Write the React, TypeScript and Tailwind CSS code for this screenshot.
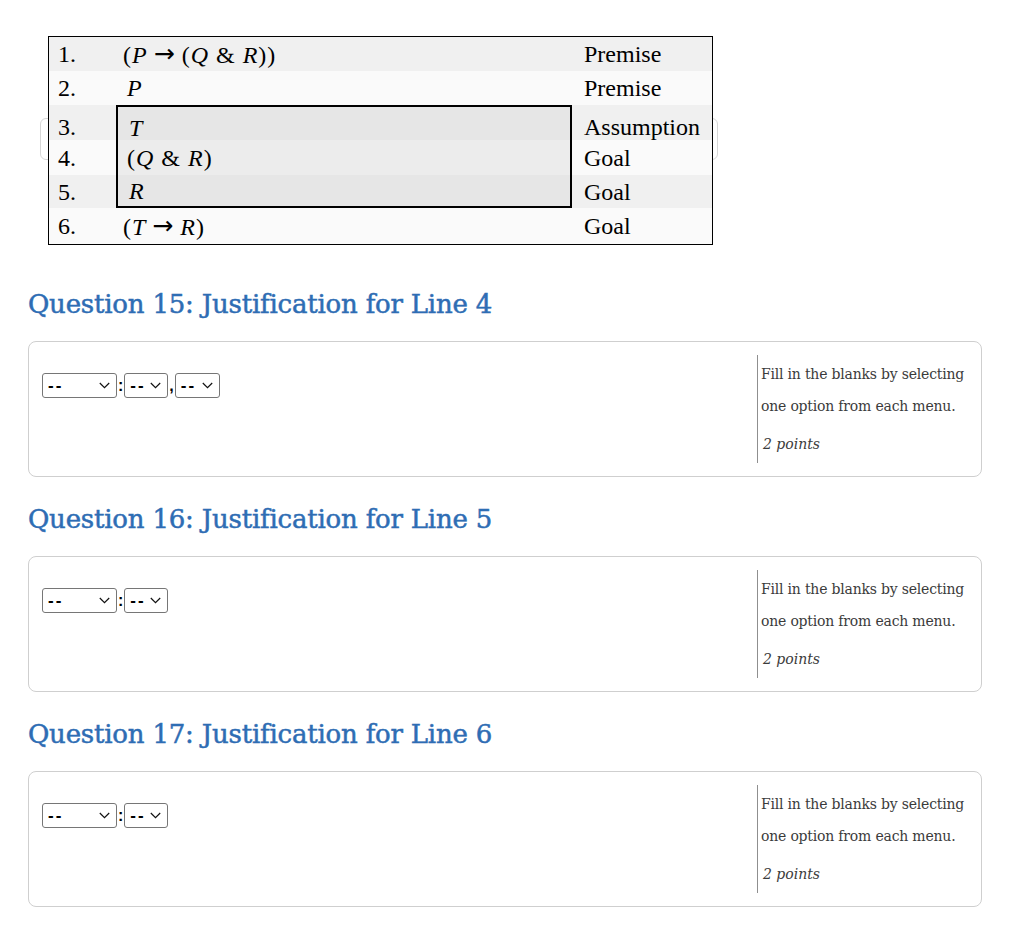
import React from "react";

const serif = { fontFamily: '"Liberation Serif", "Times New Roman", serif' };

function M({ children }: { children: React.ReactNode }) {
  return <span className="italic">{children}</span>;
}

function Arrow() {
  return (
    <span className="mx-[6px] not-italic text-[25px] font-['DejaVu_Sans',sans-serif] relative top-[-1px]">→</span>
  );
}

function Sel({ w }: { w: string }) {
  return (
    <div
      className={`flex items-center justify-between h-[25px] border border-[#767676] rounded-[3px] bg-white pl-[5px] pr-[6px] ${w}`}
    >
      <span className="text-[17px] text-black leading-none font-bold font-['Liberation_Sans',Arial,sans-serif] tracking-[2px]">--</span>
      <svg width="11" height="7" viewBox="0 0 11 7" fill="none">
        <path d="M0.8 1 L5.5 5.7 L10.2 1" stroke="#111" strokeWidth="1.2" />
      </svg>
    </div>
  );
}

function Sep({ c }: { c: string }) {
  return (
    <span className="text-[16px] text-black leading-none mx-[1px] font-semibold font-['Liberation_Sans',Arial,sans-serif]">
      {c}
    </span>
  );
}

function Card({ three }: { three?: boolean }) {
  return (
    <div className="flex justify-between border border-[#cfcfcf] rounded-[8px] h-[136px] w-[954px] py-[13px] pl-[13px] pr-[14px] bg-white">
      <div className="pt-[18px] flex items-start">
        <div className="flex items-center">
          <Sel w="w-[75px]" />
          <Sep c=":" />
          <Sel w="w-[44px]" />
          {three && (
            <>
              <Sep c="," />
              <Sel w="w-[45px]" />
            </>
          )}
        </div>
      </div>
      <div className="border-l border-[#8f8f8f] w-[210px] pl-[3px] pt-[3px] font-['DejaVu_Serif',Georgia,serif] text-[#3b3b3b]">
        <p className="text-[14px] leading-[32px] tracking-[-0.2px]">
          Fill in the blanks by selecting one option from each menu.
        </p>
        <p className="mt-[10px] text-[14px] leading-[24px] italic pl-[2px]">2 points</p>
      </div>
    </div>
  );
}

function Heading({ children, first }: { children: React.ReactNode; first?: boolean }) {
  return (
    <h2
      className={`${first ? "mt-[43px]" : "mt-[26px]"} mb-[21px] h-[32px] text-[26px] leading-[32px] text-[#2e6db4] font-['DejaVu_Serif',Georgia,serif] tracking-[-0.2px] [-webkit-text-stroke:0.5px_#2e6db4]`}
    >
      {children}
    </h2>
  );
}

export default function App() {
  const cellNum = "w-[67px] pl-[9px] shrink-0";
  const cellF = "w-[456px] pl-[7px] shrink-0 tracking-[1px]";
  const cellJ = "pl-[12px]";
  return (
    <div className="w-[1024px] min-h-[934px] bg-white pt-[36px] pl-[28px]">
      <div className="relative ml-[20px] w-[665px]">
        <div className="absolute left-[-8px] top-[82px] w-[678px] h-[42px] rounded-[6px] border border-[#d6d6d6] bg-white" />
        <div className="relative border border-black w-[665px] text-[24px] text-black leading-none" style={serif}>
          <div className="flex items-center h-[34px] bg-[#f0f0f0]">
            <div className={cellNum}>1.</div>
            <div className={cellF}>
              (<M>P</M>
              <Arrow />
              (<M>Q</M>&nbsp;&amp;&nbsp;<M>R</M>))
            </div>
            <div className={cellJ}>Premise</div>
          </div>
          <div className="flex items-center h-[34px] bg-[#fafafa]">
            <div className={cellNum}>2.</div>
            <div className={`${cellF} pl-[11px]`}>
              <M>P</M>
            </div>
            <div className={cellJ}>Premise</div>
          </div>
          <div className="flex">
            <div className="w-[67px] shrink-0 flex flex-col">
              <div className="h-[35px] bg-[#f0f0f0] pl-[9px] pt-[9px] flex items-center">3.</div>
              <div className="h-[35px] bg-[#fafafa] pl-[9px] flex items-center">4.</div>
              <div className="h-[33px] bg-[#f0f0f0] pl-[9px] flex items-center">5.</div>
            </div>
            <div className="w-[456px] shrink-0 border-2 border-black flex flex-col tracking-[1px]">
              <div className="h-[33px] bg-[#e6e6e6] pl-[11px] pt-[9px] flex items-center">
                <M>T</M>
              </div>
              <div className="h-[35px] bg-[#ececec] pl-[9px] flex items-center">
                (<M>Q</M>&nbsp;&amp;&nbsp;<M>R</M>)
              </div>
              <div className="h-[31px] bg-[#e6e6e6] pl-[11px] flex items-center">
                <M>R</M>
              </div>
            </div>
            <div className="flex-1 flex flex-col">
              <div className="h-[35px] bg-[#f0f0f0] pl-[12px] pt-[9px] flex items-center">Assumption</div>
              <div className="h-[35px] bg-[#fafafa] pl-[12px] flex items-center">Goal</div>
              <div className="h-[33px] bg-[#f0f0f0] pl-[12px] flex items-center">Goal</div>
            </div>
          </div>
          <div className="flex items-center h-[36px] bg-[#fafafa]">
            <div className={cellNum}>6.</div>
            <div className={cellF}>
              (<M>T</M>
              <Arrow />
              <M>R</M>)
            </div>
            <div className={cellJ}>Goal</div>
          </div>
        </div>
      </div>

      <Heading first>Question 15: Justification for Line 4</Heading>
      <Card three />
      <Heading>Question 16: Justification for Line 5</Heading>
      <Card />
      <Heading>Question 17: Justification for Line 6</Heading>
      <Card />
    </div>
  );
}
